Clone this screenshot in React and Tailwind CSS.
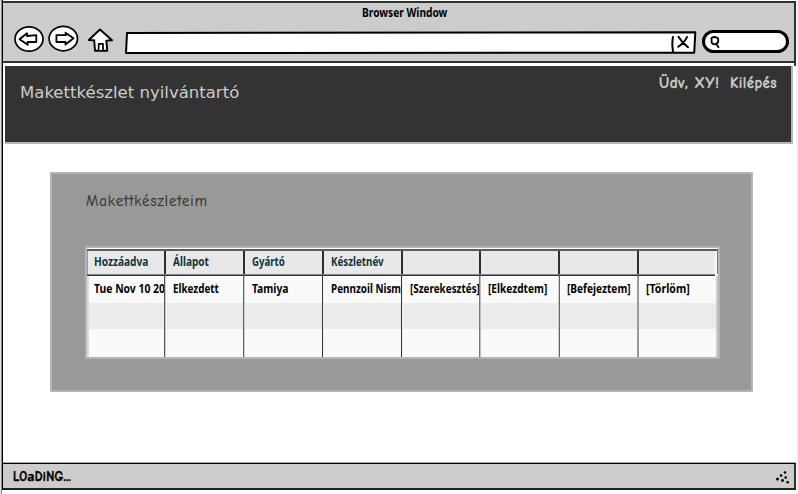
import { useLayoutEffect, useRef, useState } from "react";

// Text condensed or widened horizontally to occupy a given width.
function Fit({ width, className = "", children }) {
  const ref = useRef(null);
  const [scale, setScale] = useState(1);
  useLayoutEffect(() => {
    setScale(width / ref.current.offsetWidth);
  }, [width]);
  return (
    <span className="block whitespace-nowrap" style={{ width }}>
      <span
        ref={ref}
        className={"block w-max origin-left whitespace-nowrap " + className}
        style={{ transform: `scaleX(${scale})` }}
      >
        {children}
      </span>
    </span>
  );
}

const columns = [
  { head: "Hozzáadva", hw: 54, cell: "Tue Nov 10 20", cw: 71, line: "border-r-[#ccc] bg-[#555]" },
  { head: "Állapot", hw: 36, cell: "Elkezdett", cw: 46, line: "border-r-[#ccc] bg-[#666]" },
  { head: "Gyártó", hw: 33, cell: "Tamiya", cw: 36, line: "border-r-[#f4f4f4] bg-[#333]" },
  { head: "Készletnév", hw: 53, cell: "Pennzoil Nism", cw: 70, line: "border-r-[#f4f4f4] bg-[#333]" },
  { head: "", hw: 0, cell: "[Szerekesztés]", cw: 70, line: "border-r-[#bbb] bg-[#777]" },
  { head: "", hw: 0, cell: "[Elkezdtem]", cw: 59, line: "border-r-[#666] bg-[#ccc]" },
  { head: "", hw: 0, cell: "[Befejeztem]", cw: 64, line: "border-r-[#999] bg-[#999]" },
  { head: "", hw: 0, cell: "[Törlöm]", cw: 44, line: "" },
];

const grid = "grid grid-cols-[79px_79px_79px_79px_78px_79px_79px_79px]";
const boldFont = "font-['Noto_Sans','Open_Sans',sans-serif] font-bold";
const comicFont = "font-['Comic_Neue','Lato',sans-serif] [font-variant-ligatures:none]";

function Toolbar() {
  return (
    <svg className="shrink-0" width="791" height="37" viewBox="3 24 791 37" fill="white" stroke="black" strokeWidth="2" strokeLinejoin="round" strokeLinecap="round">
      <ellipse cx="29" cy="39" rx="14" ry="12.2" strokeWidth="1.7" />
      <path d="M19.5 39.2 L27 33.3 V36 L36.3 35.2 V42 L27.5 42 L27.8 44.8 Z" strokeWidth="1.8" />
      <ellipse cx="63.3" cy="38.6" rx="14.2" ry="12.2" strokeWidth="1.7" />
      <path d="M73.5 38.2 L65.5 32.8 L66 35 L56.4 35.2 V42 L65.5 42 V44.5 Z" strokeWidth="1.8" />
      <path d="M100 29.5 L88.8 40 L94.2 40.3 L95 50.7 L107.3 50.7 L106.3 40.6 L112 40.2 Z" strokeWidth="1.9" />
      <path d="M98.5 50 L98.8 43.8 H103 V50" strokeWidth="1.7" />
      <path d="M127 33 L695.3 32.2 L694.2 52.8 L126 53 Z" />
      <path d="M673 37 Q671.7 43 673 51.5" fill="none" />
      <path d="M678.5 36.7 C681 41 684 44 688 47.3 M687 37 C685 42 682 44 678.3 46.8" fill="none" />
      <rect x="703.5" y="31.5" width="84" height="20" rx="10" strokeWidth="3" />
      <path d="M711.5 38 Q715 35.7 718 38.5 Q719 42 716.8 44 Q713 45.3 711.6 42.5 Z M716 43.5 L718.5 47.3" fill="none" strokeWidth="1.8" />
    </svg>
  );
}

export default function App() {
  return (
    <div className="h-[494px] w-[798px] overflow-hidden bg-white font-['Noto_Sans',sans-serif] text-black">
      <div className="flex h-full border-l border-[#e0e0e0]">
        <div className="w-px bg-[#888]" />
        <div className="flex h-[490px] w-[794px] shrink-0 flex-col border-l border-black pt-px">
          <header className="flex h-[62px] shrink-0 flex-col border-2 border-l-0 border-[#2f322f] bg-[#ccc]">
            <div className="h-[21px] pl-[359px]">
              <Fit width={85} className={`${boldFont} text-[12px] leading-[19px]`}>Browser Window</Fit>
            </div>
            <Toolbar />
          </header>

          <main className="h-[400px] shrink-0 border-b border-[#aaa] pl-[2px]">
            <div className="flex h-[3px] justify-end">
              <div className="w-[2px] bg-[#2f322f]" />
            </div>
            <div className="flex h-[78px] w-[788px] justify-between border-r-2 border-b-2 border-[#b2b6b9] bg-[#333] pl-[15px] text-[#ccc]">
              <div className="pt-[15px]">
                <Fit width={219} className="font-['DejaVu_Sans',sans-serif] text-[16px] leading-[24px]">Makettkészlet nyilvántartó</Fit>
              </div>
              <div className="flex gap-[11px] pt-[7px] pr-[14px]">
                <Fit width={60} className={`${comicFont} text-[16px] leading-5 font-bold tracking-[0.5px] [-webkit-text-stroke:0.3px_#ccc]`}>Üdv, XY!</Fit>
                <Fit width={47} className={`${comicFont} text-[16px] leading-5 font-bold tracking-[0.5px] [-webkit-text-stroke:0.3px_#ccc]`}>Kilépés</Fit>
              </div>
            </div>

            <section className="mt-7 ml-[45px] h-[220px] w-[703px] border-2 border-[#b2b6b9] bg-[#999] pr-[31px] pl-[33px]">
              <h1 className="h-[72px] pt-[17px] pl-px text-[#333]">
                <Fit width={122} className={`${comicFont} text-[16px] leading-5 tracking-[1px] [-webkit-text-stroke:0.2px_#333]`}>Makettkészleteim</Fit>
              </h1>
              <div className={`h-[113px] border-2 border-[#b2b6b9] bg-[#fafafa] ${boldFont} text-[12px]`}>
                <div className="h-px bg-white" />
                <div className="h-[2px] bg-[#5f5a5a]" />
                <div className={`${grid} h-[23px] bg-[#e8e8e8] text-[#12343b] shadow-[inset_1px_0_#999]`}>
                  {columns.map((c, i) => (
                    <div key={i} className={`pl-[7px] ${i < 7 ? "border-r-2 border-[#302d2d]" : "border-r border-[#777] shadow-[inset_-2px_0_#fafafa]"}`}>
                      {c.head && <Fit width={c.hw} className="leading-[22px]">{c.head}</Fit>}
                    </div>
                  ))}
                </div>
                <div className="mr-[3px] h-[2px] border-b border-[#333] bg-[#888]" />
                <div className={`${grid} h-[81px] bg-[linear-gradient(#fafafa_27px,#ececec_27px,#ececec_53px,#fafafa_53px)]`}>
                  {columns.map((c, i) => (
                    <div key={i} className={`flex ${i === 0 ? "shadow-[inset_2px_0_#ddd]" : ""}`}>
                      <div className="min-w-0 flex-1 overflow-hidden pl-[7px]">
                        <Fit width={c.cw} className="leading-[25px]">{c.cell}</Fit>
                      </div>
                      {c.line ? <div className={`w-[2px] border-r ${c.line}`} /> : <div className="w-[2px] bg-[#ccc]" />}
                    </div>
                  ))}
                </div>
              </div>
            </section>
          </main>

          <footer className="flex h-[27px] shrink-0 items-center justify-between border-t border-r-2 border-b-2 border-t-black border-r-[#2f322f] border-b-[#222] bg-[#ccc] pt-px pr-[3px] pl-[10px]">
            <Fit width={58} className={`${comicFont} text-[13px] leading-5 font-bold tracking-[0.3px] [-webkit-text-stroke:0.5px_black]`}>LO<span className="font-['Noto_Sans',sans-serif] text-[13px] font-semibold">a</span>DiNG...</Fit>
            <svg width="16" height="14" viewBox="776 469 16 14">
              <circle cx="786" cy="471.5" r="1.3" />
              <circle cx="782" cy="474.5" r="1.3" />
              <circle cx="778.5" cy="478" r="1.5" />
              <circle cx="786.7" cy="476.5" r="1.3" />
              <circle cx="783.5" cy="479.5" r="1.4" />
              <circle cx="788.7" cy="481.3" r="1.3" />
            </svg>
          </footer>
        </div>
        <div className="w-[2px] bg-[#f4f4f4]" />
      </div>
    </div>
  );
}
